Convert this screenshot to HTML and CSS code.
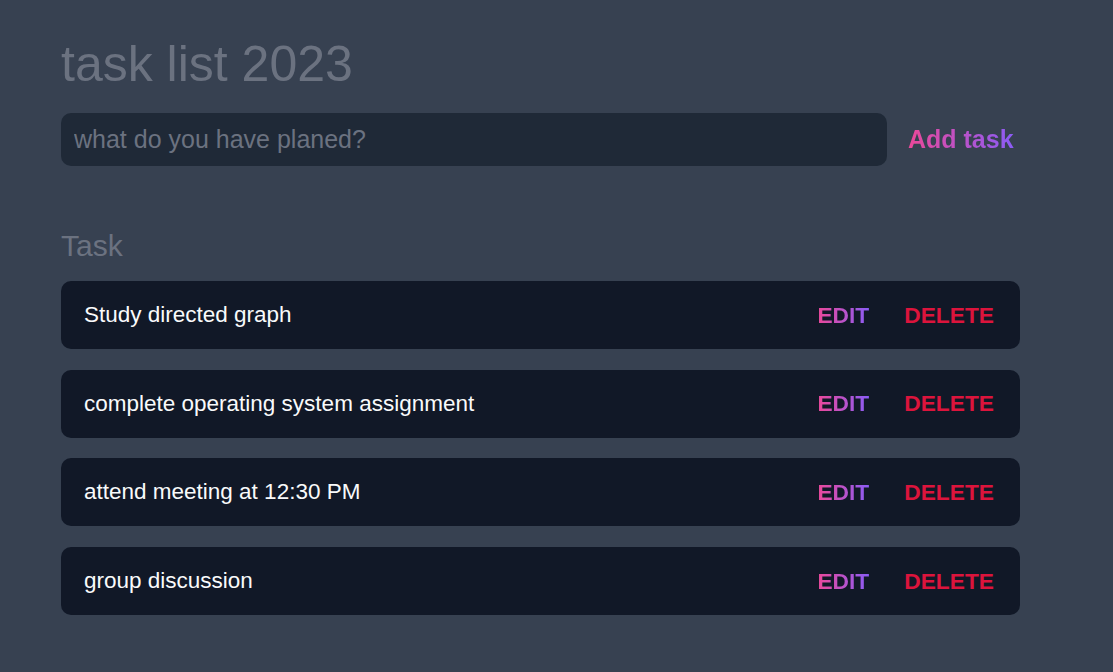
FILE: index.html
```html
<!DOCTYPE html>
<html>
<head>
<meta charset="utf-8">
<link rel="stylesheet" href="styles.css">
</head>
<body>
<main class="app">
  <h1 class="title">task list 2023</h1>
  <form class="add-form">
    <input class="add-input" type="text" placeholder="what do you have planed?">
    <button class="add-btn" type="button"><span class="grad">Add task</span></button>
  </form>
  <h2 class="section">Task</h2>
  <ul class="tasks">
    <li class="task"><span class="task-text">Study directed graph</span><span class="actions"><button class="edit"><span class="grad">EDIT</span></button><button class="delete">DELETE</button></span></li>
    <li class="task"><span class="task-text">complete operating system assignment</span><span class="actions"><button class="edit"><span class="grad">EDIT</span></button><button class="delete">DELETE</button></span></li>
    <li class="task"><span class="task-text">attend meeting at 12:30 PM</span><span class="actions"><button class="edit"><span class="grad">EDIT</span></button><button class="delete">DELETE</button></span></li>
    <li class="task"><span class="task-text">group discussion</span><span class="actions"><button class="edit"><span class="grad">EDIT</span></button><button class="delete">DELETE</button></span></li>
  </ul>
</main>
</body>
</html>
```
FILE: styles.css
```css
* { box-sizing: border-box; }
html, body { margin: 0; padding: 0; }
body {
  background: #374151;
  font-family: "Liberation Sans", Arial, sans-serif;
  min-height: 672px;
}
.app {
  width: 959px;
  margin-left: 61px;
  padding-top: 35px;
}
.title {
  margin: 0;
  font-size: 50px;
  font-weight: 400;
  color: #6b7280;
  line-height: 58px;
}
.add-form {
  display: flex;
  align-items: center;
  margin-top: 20px;
}
.add-input {
  width: 826px;
  height: 53px;
  background: #1f2937;
  border: none;
  border-radius: 10px;
  padding: 0 13px;
  font-family: inherit;
  font-size: 25px;
  color: #e5e7eb;
  outline: none;
}
.add-input::placeholder { color: #6b7280; }
.add-btn {
  margin-left: 21px;
  background: none;
  border: none;
  padding: 0;
  font-family: inherit;
  font-size: 25px;
  font-weight: 700;
  cursor: pointer;
}
.grad {
  background: linear-gradient(90deg, #ec4899, #8b5cf6);
  -webkit-background-clip: text;
  background-clip: text;
  color: transparent;
}
.section {
  margin: 64px 0 0;
  font-size: 30px;
  font-weight: 400;
  color: #6b7280;
  line-height: 32px;
}
.tasks {
  list-style: none;
  margin: 19px 0 0;
  padding: 0;
  display: flex;
  flex-direction: column;
  gap: 20.7px;
}
.task {
  height: 68px;
  background: #111827;
  border-radius: 10px;
  display: flex;
  align-items: center;
  justify-content: space-between;
  padding: 0 26px 0 23px;
}
.task-text {
  color: #f9fafb;
  font-size: 22.5px;
}
.actions {
  display: flex;
  gap: 35px;
}
.actions button {
  background: none;
  border: none;
  padding: 0;
  font-family: inherit;
  font-size: 22.75px;
  font-weight: 700;
  cursor: pointer;
}
.delete { color: #dc143c; }
```
